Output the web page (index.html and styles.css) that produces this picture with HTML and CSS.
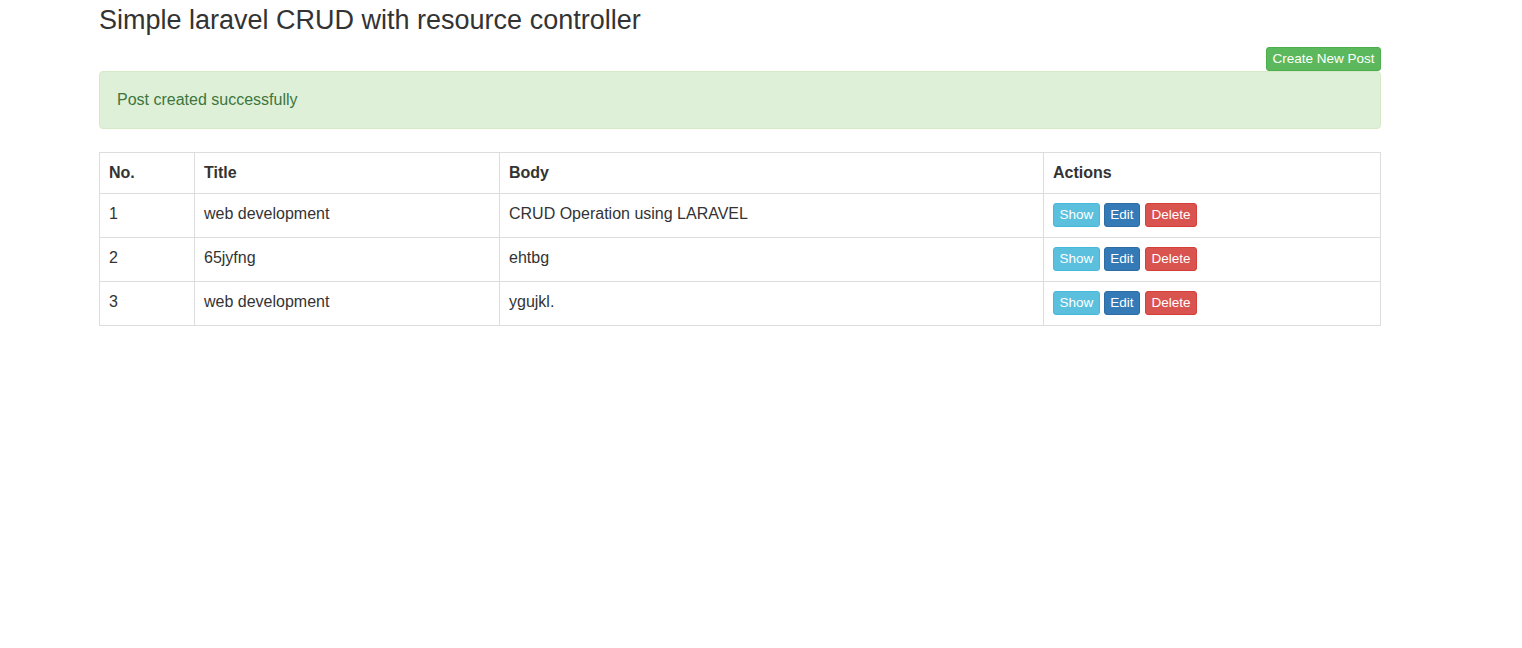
FILE: index.html
```html
<!DOCTYPE html>
<html lang="en">
<head>
<meta charset="utf-8">
<title>Simple laravel CRUD with resource controller</title>
<link rel="stylesheet" href="styles.css">
</head>
<body>
<div class="container">
  <h2 class="page-title">Simple laravel CRUD with resource controller</h2>
  <div class="toolbar">
    <a class="btn btn-success" href="#">Create New Post</a>
  </div>
  <div class="alert alert-success">Post created successfully</div>
  <table class="table">
    <colgroup>
      <col class="col-no">
      <col class="col-title">
      <col class="col-body">
      <col class="col-actions">
    </colgroup>
    <thead>
      <tr><th>No.</th><th>Title</th><th>Body</th><th>Actions</th></tr>
    </thead>
    <tbody>
      <tr>
        <td>1</td><td>web development</td><td>CRUD Operation using LARAVEL</td>
        <td><div class="actions"><a class="btn btn-info" href="#">Show</a><a class="btn btn-primary" href="#">Edit</a><button class="btn btn-danger">Delete</button></div></td>
      </tr>
      <tr>
        <td>2</td><td>65jyfng</td><td>ehtbg</td>
        <td><div class="actions"><a class="btn btn-info" href="#">Show</a><a class="btn btn-primary" href="#">Edit</a><button class="btn btn-danger">Delete</button></div></td>
      </tr>
      <tr>
        <td>3</td><td>web development</td><td>ygujkl.</td>
        <td><div class="actions"><a class="btn btn-info" href="#">Show</a><a class="btn btn-primary" href="#">Edit</a><button class="btn btn-danger">Delete</button></div></td>
      </tr>
    </tbody>
  </table>
</div>
</body>
</html>
```

FILE: styles.css
```css
* { box-sizing: border-box; }

html, body {
  margin: 0;
  background: #fff;
}

body {
  font-family: "Liberation Sans", Arial, Helvetica, sans-serif;
  font-size: 16px;
  color: #333;
}

.container {
  width: 1282px;
  margin-left: 99px;
}

.page-title {
  margin: 5px 0 0;
  font-size: 27px;
  line-height: 30px;
  font-weight: 400;
  color: #333;
}

.toolbar {
  display: flex;
  justify-content: flex-end;
  margin-top: 12px;
}

.btn {
  display: inline-block;
  font-family: inherit;
  font-size: 13.5px;
  line-height: 22px;
  height: 24px;
  padding: 0 5.5px;
  border: 1px solid transparent;
  border-radius: 3px;
  color: #fff;
  text-decoration: none;
  white-space: nowrap;
  cursor: pointer;
  margin: 0;
}

.btn-success { background: #5cb85c; border-color: #4cae4c; }
.btn-info { background: #5bc0de; border-color: #46b8da; }
.btn-primary { background: #337ab7; border-color: #2e6da4; }
.btn-danger { background: #d9534f; border-color: #d43f3a; margin-left: 1px; }

.alert {
  margin: 0 0 23px;
  padding: 16px 17px 16px;
  line-height: 24px;
  font-size: 16px;
  border: 1px solid #d6e9c6;
  border-radius: 4px;
}

.alert-success {
  background: #dff0d8;
  color: #3c763d;
}

.table {
  width: 1281px;
  table-layout: fixed;
  border-collapse: collapse;
  border: 1px solid #ddd;
}

.col-no { width: 95px; }
.col-title { width: 305px; }
.col-body { width: 544px; }
.col-actions { width: 337px; }

.table th,
.table td {
  border: 1px solid #ddd;
  text-align: left;
  vertical-align: top;
}

.table th {
  padding: 9px 9px 9px;
  line-height: 22px;
  font-weight: 700;
}

.table td {
  padding: 8px 9px 10px;
  line-height: 24px;
}

.actions {
  display: flex;
  gap: 4px;
  margin-top: 1px;
}
```
